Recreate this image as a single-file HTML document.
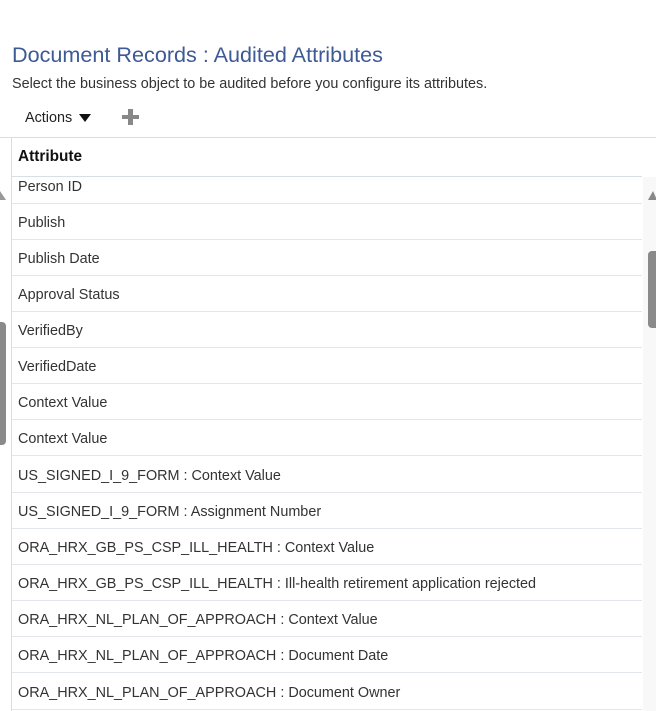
<!DOCTYPE html>
<html><head><style>
*{margin:0;padding:0;box-sizing:border-box}
body{width:656px;height:711px;overflow:hidden;background:#fff;font-family:"Liberation Sans",sans-serif;position:relative;color:#333}
.t{position:absolute;left:12px;top:42px;font-size:21.6px;color:#3e5a94;white-space:nowrap}
.s{position:absolute;left:12px;top:76px;font-size:14.4px;color:#333;white-space:nowrap}
.a{position:absolute;left:25px;top:110px;font-size:14.4px;color:#222}
.tri{position:absolute;left:79px;top:114px;width:0;height:0;border-left:6px solid transparent;border-right:6px solid transparent;border-top:8px solid #111}
.p1{position:absolute;left:122px;top:115px;width:17px;height:4px;background:#888}
.p2{position:absolute;left:128px;top:109px;width:5px;height:16px;background:#888}
.hl{position:absolute;left:0;top:137px;width:656px;height:1px;background:#d6dfe6}
.vl{position:absolute;left:11px;top:137px;width:1px;height:574px;background:#d6dfe6}
.h{position:absolute;left:18px;top:148px;font-size:15.4px;font-weight:bold;color:#111}
.hb{position:absolute;left:11px;top:176px;width:631px;height:1px;background:#d6dfe6}
.r{position:absolute;left:12px;width:630px;height:36px;border-bottom:1px solid #e3e7eb;font-size:14.4px;color:#333;padding-left:6px;line-height:38px;white-space:nowrap;overflow:hidden}
.tr{position:absolute;left:643px;top:177px;width:13px;height:534px;background:#f8f8f8}
</style></head><body>
<div class="t">Document Records : Audited Attributes</div>
<div class="s">Select the business object to be audited before you configure its attributes.</div>
<div class="a">Actions</div><div class="tri"></div>
<div class="p1"></div><div class="p2"></div>
<div class="hl"></div><div class="vl"></div>
<div class="h">Attribute</div>
<div class="hb"></div>
<div class="tr"></div>
<div style="position:absolute;left:648px;top:191px;width:0;height:0;border-left:5px solid transparent;border-right:4px solid transparent;border-bottom:9px solid #888"></div>
<div style="position:absolute;left:648px;top:251px;width:8px;height:77px;background:#8a8a8a;border-radius:4px 0 0 4px"></div>
<div style="position:absolute;left:0;top:191px;width:0;height:0;border-right:6px solid transparent;border-bottom:9px solid #999"></div>
<div style="position:absolute;left:0;top:322px;width:6px;height:123px;background:#8a8a8a;border-radius:0 4px 4px 0"></div>
<div class="r" style="top:168px;clip-path:inset(9px 0 0 0)">Person ID</div>
<div class="r" style="top:204px">Publish</div>
<div class="r" style="top:240px">Publish Date</div>
<div class="r" style="top:276px">Approval Status</div>
<div class="r" style="top:312px">VerifiedBy</div>
<div class="r" style="top:348px">VerifiedDate</div>
<div class="r" style="top:384px">Context Value</div>
<div class="r" style="top:420px">Context Value</div>
<div class="r" style="top:457px">US_SIGNED_I_9_FORM : Context Value</div>
<div class="r" style="top:493px">US_SIGNED_I_9_FORM : Assignment Number</div>
<div class="r" style="top:529px">ORA_HRX_GB_PS_CSP_ILL_HEALTH : Context Value</div>
<div class="r" style="top:565px">ORA_HRX_GB_PS_CSP_ILL_HEALTH : Ill-health retirement application rejected</div>
<div class="r" style="top:601px">ORA_HRX_NL_PLAN_OF_APPROACH : Context Value</div>
<div class="r" style="top:637px">ORA_HRX_NL_PLAN_OF_APPROACH : Document Date</div>
<div class="r" style="top:674px">ORA_HRX_NL_PLAN_OF_APPROACH : Document Owner</div>
</body></html>
